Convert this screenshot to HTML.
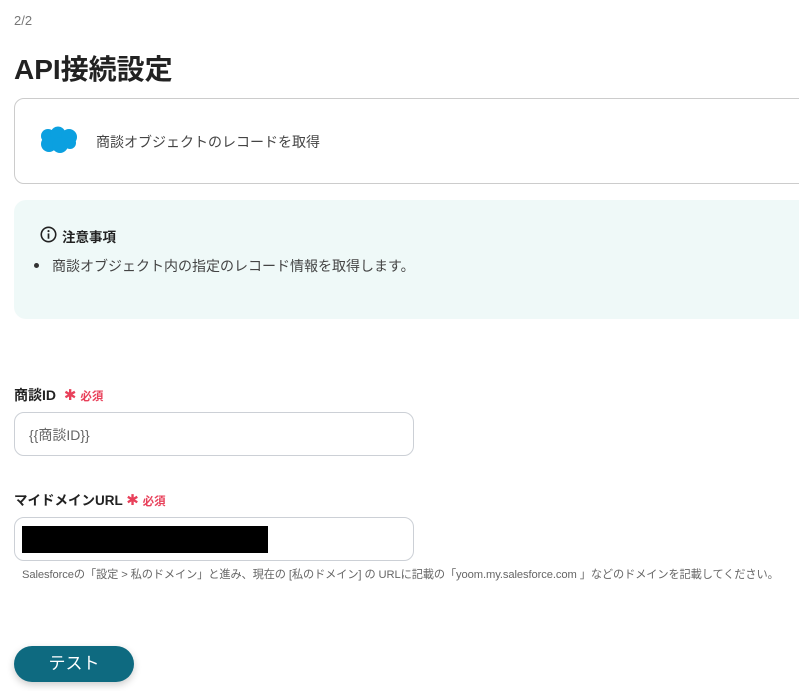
<!DOCTYPE html>
<html><head><meta charset="utf-8"><style>
*{margin:0;padding:0;box-sizing:border-box}
body{width:799px;height:691px;overflow:hidden;background:#fff;font-family:"Liberation Sans","Noto Sans CJK JP",sans-serif;color:#333;position:relative}
.a{position:absolute;white-space:nowrap}
.st{color:#e8405a;font-family:"DejaVu Sans",sans-serif;font-size:15px;font-weight:bold}
</style></head><body>
<div class="a" style="left:14px;top:13px;font-size:13px;color:#777">2/2</div>
<div class="a" style="left:14px;top:48px;font-size:28px;font-weight:bold;color:#222">API接続設定</div>
<div class="a" style="left:14px;top:98px;width:800px;height:86px;border:1px solid #ccc;border-radius:10px"></div>
<svg class="a" style="left:39px;top:126px" width="40" height="29" viewBox="0 0 40 29"><g fill="#0ba0e0"><circle cx="9" cy="10" r="7"/><circle cx="19" cy="8" r="7.5"/><circle cx="30" cy="11" r="8"/><circle cx="10" cy="18" r="8"/><circle cx="21" cy="19" r="8"/><circle cx="31" cy="17" r="6"/></g></svg>
<div class="a" style="left:96px;top:132px;font-size:14px;color:#444">商談オブジェクトのレコードを取得</div>
<div class="a" style="left:14px;top:200px;width:800px;height:119px;background:#eff9f8;border-radius:12px"></div>
<svg class="a" style="left:40px;top:226px" width="17" height="17" viewBox="0 0 16 16"><circle cx="8" cy="8" r="6.8" fill="none" stroke="#222" stroke-width="1.5"/><rect x="7.2" y="7" width="1.6" height="5" fill="#222"/><circle cx="8" cy="4.8" r="1" fill="#222"/></svg>
<div class="a" style="left:62px;top:226px;font-size:13.5px;font-weight:bold;color:#222">注意事項</div>
<div class="a" style="left:34px;top:263px;width:5px;height:5px;border-radius:50%;background:#333"></div>
<div class="a" style="left:52px;top:256px;font-size:14px;color:#444">商談オブジェクト内の指定のレコード情報を取得します。</div>
<div class="a" style="left:14px;top:385px;font-size:14px;font-weight:bold;color:#222">商談ID <span class="st" style="margin-left:4px">✱</span> <span style="color:#e8405a;font-size:11.5px">必須</span></div>
<div class="a" style="left:14px;top:412px;width:400px;height:44px;border:1px solid #ccd0d6;border-radius:10px"></div>
<div class="a" style="left:29px;top:425px;font-size:14px;color:#666">{{商談ID}}</div>
<div class="a" style="left:14px;top:489px;font-size:13.5px;font-weight:bold;color:#222">マイドメインURL <span class="st">✱</span> <span style="color:#e8405a;font-size:11.5px">必須</span></div>
<div class="a" style="left:14px;top:517px;width:400px;height:44px;border:1px solid #ccd0d6;border-radius:10px"></div>
<div class="a" style="left:22px;top:526px;width:246px;height:27px;background:#000"></div>
<div class="a" style="left:22px;top:566px;font-size:11.2px;color:#666;letter-spacing:-0.1px">Salesforceの「設定 &gt; 私のドメイン」と進み、現在の [私のドメイン] の URLに記載の「yoom.my.salesforce.com 」などのドメインを記載してください。</div>
<div class="a" style="left:14px;top:646px;width:120px;height:36px;background:#0e6a80;border-radius:18px;box-shadow:0 3px 8px rgba(0,0,0,.2);color:#fff;font-size:17px;text-align:center;line-height:36px">テスト</div>
</body></html>
